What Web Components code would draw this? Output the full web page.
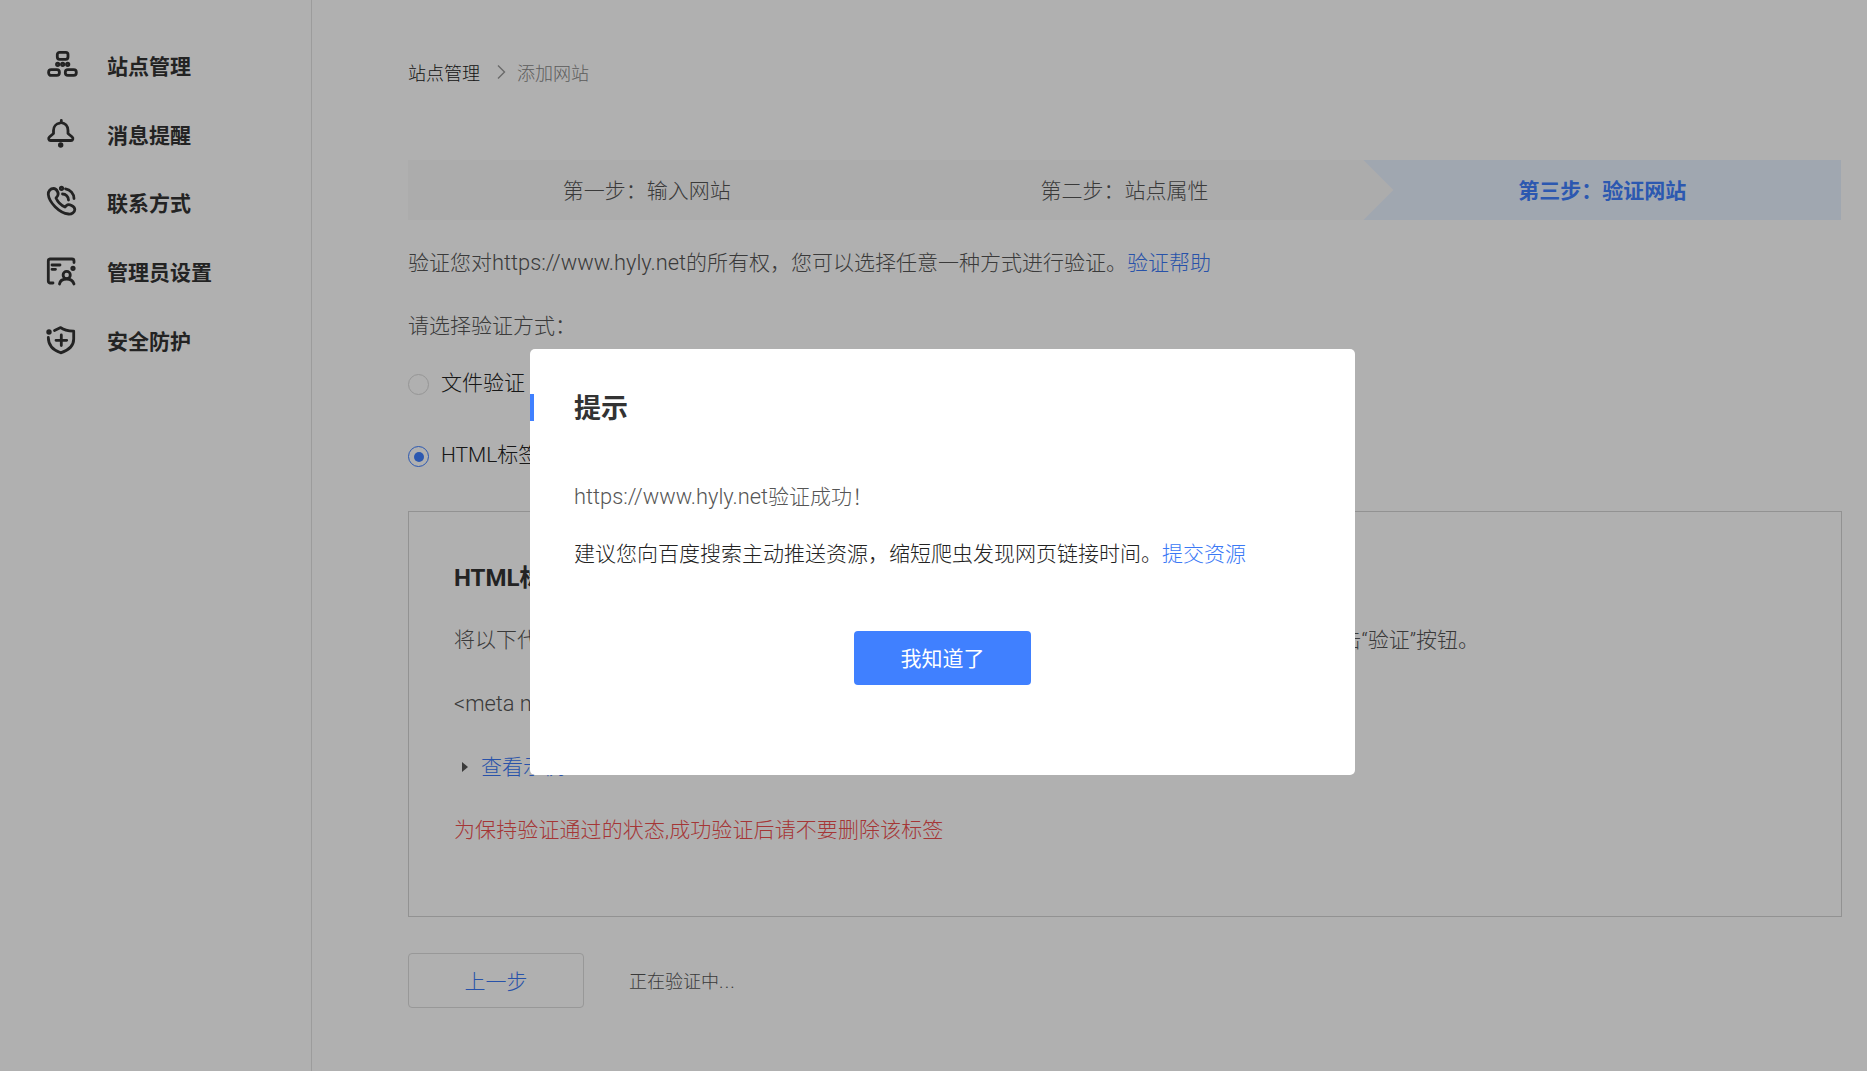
<!DOCTYPE html>
<html lang="zh-CN">
<head>
<meta charset="utf-8">
<title>添加网站</title>
<style>
html,body{margin:0;padding:0;height:100%;overflow:hidden;background:#fff}
body{font-family:Roboto,"Noto Sans CJK SC",sans-serif;font-weight:300;color:#222}
</style>
</head>
<body>
<site-app>
  <side-nav slot="side">
    <nav-item label="站点管理"><svg viewBox="0 0 32 32"><rect x="11.3" y="4.3" width="10.7" height="7" rx="2.2"/><rect x="2.6" y="21.6" width="10.8" height="5.8" rx="2.6"/><rect x="19.3" y="21.6" width="11" height="5.8" rx="2.6"/><g class="f"><circle cx="11.7" cy="16.3" r="1.2"/><circle cx="16.7" cy="16.3" r="1.2"/><circle cx="21.7" cy="16.3" r="1.2"/></g></svg></nav-item>
    <nav-item label="消息提醒"><svg viewBox="0 0 32 32"><path d="M13.8 6.2C10 6.7 7.5 9.6 7.5 13.5V16.5L3.4 20C2 21.2 2.8 23.5 4.6 23.5H25C26.8 23.5 27.6 21.2 26.2 20L22 16.5V13.5C22 9 19 6 15.3 5.6V3.4"/><circle class="f" cx="14.7" cy="28" r="1.3"/></svg></nav-item>
    <nav-item label="联系方式"><svg viewBox="0 0 32 32"><path d="M7.5 3.5C4.5 3.5 2 6 2.3 9.5C3 17 13 28 22.5 29C26 29.3 28.8 27 28.8 24.5C28.8 22.5 27.5 21.5 25.5 20.5C23.5 19.5 22 19.2 20.5 20.5L19 22C15.5 20.5 11.5 16.5 10 13L11.5 11C12.5 9.5 12.3 8 11.5 6.5C10.5 4.5 9.5 3.5 7.5 3.5Z"/><path d="M19.5 3.8A10 10 0 0 1 28 13.5"/><path d="M16.5 9A6 6 0 0 1 22.5 15"/><circle class="f" cx="15.5" cy="3.3" r="1.2"/></svg></nav-item>
    <nav-item label="管理员设置"><svg viewBox="0 0 32 32"><path d="M7 29H4A2 2 0 0 1 2.3 27V7A2 2 0 0 1 4 5H26A2 2 0 0 1 28 7V8.5"/><path d="M6 11H14M6 15.3H9.5"/><circle cx="20.7" cy="21" r="3.6"/><path d="M13.5 30C14 26.5 17 25 20.7 25C24.5 25 27 27 28 30"/><circle class="f" cx="27" cy="14.3" r="1.2"/></svg></nav-item>
    <nav-item label="安全防护"><svg viewBox="0 0 32 32"><path d="M8.5 7.5L14.7 4.6C17 6.5 22 8 27.7 8.2V16C27.7 23 22 27.5 14.7 29.8C8 27.5 2.3 23 2.3 14.5"/><path d="M15.3 12V22.6M10 17.3H20.7"/><circle class="f" cx="3" cy="9" r="1.3"/></svg></nav-item>
  </side-nav>
  <bread-crumb><span>站点管理</span><span slot="current">添加网站</span></bread-crumb>
  <step-bar>
    <step-item>第一步：输入网站</step-item>
    <step-item>第二步：站点属性</step-item>
    <step-item active>第三步：验证网站</step-item>
  </step-bar>
  <text-line class="p1" top="28">验证您对<la-tin>https://www.hyly.net</la-tin>的所有权，您可以选择任意一种方式进行验证。<a-link>验证帮助</a-link></text-line>
  <text-line top="33">请选择验证方式：</text-line>
  <radio-option top="27">文件验证</radio-option>
  <radio-option top="42" checked>HTML标签验证</radio-option>
  <verify-panel>
    <span slot="title">HTML标签验证</span>
    <text-line>将以下代码添加到您的网站首页<la-tin>HTML</la-tin>代码的<la-tin style="letter-spacing:.5px">&lt;head&gt;</la-tin><span style="letter-spacing:.5px">标签与</span><la-tin style="letter-spacing:.5px">&lt;/head&gt;</la-tin>标签之间，完成操作后请点击“验证”按钮。</text-line>
    <text-line><la-tin>&lt;meta name="baidu-site-verification" content="code-hyly" /&gt;</la-tin></text-line>
    <example-toggle>查看示例</example-toggle>
    <text-line danger top="1.5">为保持验证通过的状态,成功验证后请不要删除该标签</text-line>
  </verify-panel>
  <action-row>
    <outline-button>上一步</outline-button>
    <span>正在验证中<la-tin style="letter-spacing:1.2px">...</la-tin></span>
  </action-row>
  <modal-dialog slot="modal">
    <span slot="title">提示</span>
    <span slot="first"><la-tin>https://www.hyly.net</la-tin>验证成功！</span>
    <span slot="second">建议您向百度搜索主动推送资源，缩短爬虫发现网页链接时间。<a-link>提交资源</a-link></span>
    <span slot="action">我知道了</span>
  </modal-dialog>
</site-app>
<script>
function def(name, css, html, init){
  customElements.define(name, class extends HTMLElement{
    constructor(){
      super();
      const root=this.attachShadow({mode:"open"});
      root.innerHTML="<style>"+css+"</style>"+(typeof html==="function"?html(this):html);
    }
    connectedCallback(){ if(init) init(this); }
  });
}
def("site-app",
 ":host{display:flex;width:100%;height:1071px;overflow:hidden}"+
 ".main{flex:1;min-width:0;padding:58px 26px 0 96px}"+
 ".scrim{position:fixed;inset:0;background:rgba(0,0,0,.31)}",
 '<slot name="side"></slot><div class="main"><slot></slot></div><div class="scrim"></div><slot name="modal"></slot>');
def("side-nav",
 ":host{display:block;flex:none;width:311px;height:100%;box-sizing:content-box;border-right:1px solid #e2e2e2;padding-top:32.5px}",
 "<slot></slot>");
def("nav-item",
 ":host{display:flex;align-items:center;height:68.75px;padding-left:46px;font-size:21px;font-weight:700;color:#333}"+
 "span{margin-bottom:4px}"+
 "::slotted(svg){width:32px;height:32px;flex:none;margin:-6px 29px 0 0;fill:none;stroke:#333;stroke-width:2.8;stroke-linecap:round;stroke-linejoin:round}",
 el=>'<slot></slot><span>'+el.getAttribute("label")+'</span>');
def("bread-crumb",
 ":host{display:flex;align-items:center;height:30px;font-size:18px;color:#222}"+
 "svg{width:10px;height:16px;margin:-2px 11px 0 16px;fill:none;stroke:#999;stroke-width:1.4}"+
 ".c{color:#888}span,::slotted(span){margin-bottom:2.5px}",
 '<slot></slot><svg viewBox="0 0 10 16"><path d="M2 1.5L8.5 8L2 14.5"/></svg><span class="c"><slot name="current"></slot></span>');
def("step-bar",
 ":host{display:flex;height:60px;margin-top:72px;background:#fafafa}",
 "<slot></slot>");
def("step-item",
 ":host{flex:1;display:flex;align-items:center;justify-content:center;font-size:21px;color:#555;padding-bottom:2.5px;box-sizing:border-box}"+
 ":host([active]){background:#e8f2ff;color:#4080ff;font-weight:700;clip-path:polygon(0 0,100% 0,100% 100%,0 100%,30px 50%)}",
 "<slot></slot>");
def("text-line",
 ":host{display:block;height:30px;line-height:30px;font-size:21px;color:#555;white-space:nowrap}"+
 ":host([danger]){color:#f04f4f;letter-spacing:.1px}",
 "<slot></slot>",
 el=>{const t=el.getAttribute("top"); if(t) el.style.marginTop=t+"px";});
def("la-tin",":host{font-size:1.04em}","<slot></slot>");
def("a-link",":host{color:#3a78f5}","<slot></slot>");
def("radio-option",
 ":host{display:flex;align-items:center;height:30px;font-size:21px;color:#222}"+
 ".r{width:21px;height:21px;box-sizing:border-box;border-radius:50%;border:1px solid #d9d9d9;background:#fff;margin:3px 12px 0 0;display:flex;align-items:center;justify-content:center;flex:none}"+
 ":host([checked]) .r{border:1.5px solid #4080ff}"+
 ":host([checked]) .r::after{content:'';width:10px;height:10px;border-radius:50%;background:#4080ff}"+
 ".t{margin-bottom:5px}",
 '<span class="r"></span><span class="t"><slot></slot></span>',
 el=>{el.style.marginTop=el.getAttribute("top")+"px";});
def("verify-panel",
 ":host{display:block;box-sizing:border-box;height:406.5px;margin:40.5px -1px 0 0;border:1px solid #d4d4d4;padding:50px 45px 0}"+
 ".h{height:30px;line-height:33px;font-size:24px;font-weight:700;color:#333;white-space:nowrap}"+
 ".b{display:flex;flex-direction:column;gap:33.4px;margin-top:33.9px}",
 '<div class="h"><slot name="title"></slot></div><div class="b"><slot></slot></div>');
def("example-toggle",
 ":host{display:flex;align-items:center;height:30px;font-size:21px;color:#3a78f5;margin-top:-2.4px}"+
 "i{width:0;height:0;border-left:6px solid #555;border-top:5px solid transparent;border-bottom:5px solid transparent;margin:4px 13px 0 8px}",
 "<i></i><slot></slot>");
def("action-row",
 ":host{display:flex;align-items:center;margin-top:36px;font-size:18px;color:#555}"+
 "::slotted(span){margin:-1px 0 0 45px}",
 "<slot></slot>");
def("outline-button",
 ":host{display:flex;align-items:center;justify-content:center;width:176px;height:55px;box-sizing:border-box;border:1px solid #dcdcdc;border-radius:4px;font-size:21px;color:#3a78f5;padding-bottom:2px}",
 "<slot></slot>");
def("modal-dialog",
 ":host{position:fixed;left:530px;top:349px;width:825px;height:426px;box-sizing:border-box;background:#fff;border-radius:5px;padding:44px 44px 0;color:#222}"+
 ".bar{position:absolute;left:0;top:45px;width:4px;height:27px;background:#4080ff}"+
 ".t{height:30px;line-height:32px;font-size:27px;font-weight:700;color:#333}"+
 ".a,.c{height:30px;line-height:30px;font-size:21px;white-space:nowrap}"+
 ".a{margin-top:58.5px;color:#555}.c{margin-top:27px}"+
 ".btn{width:177px;height:54px;margin:62px auto 0;background:#4080ff;color:#fff;border-radius:4px;display:flex;align-items:center;justify-content:center;font-size:21px;font-weight:400;padding-bottom:2px;box-sizing:border-box}",
 '<div class="bar"></div><div class="t"><slot name="title"></slot></div><div class="a"><slot name="first"></slot></div><div class="c"><slot name="second"></slot></div><div class="btn"><slot name="action"></slot></div>');
</script>
</body>
</html>
